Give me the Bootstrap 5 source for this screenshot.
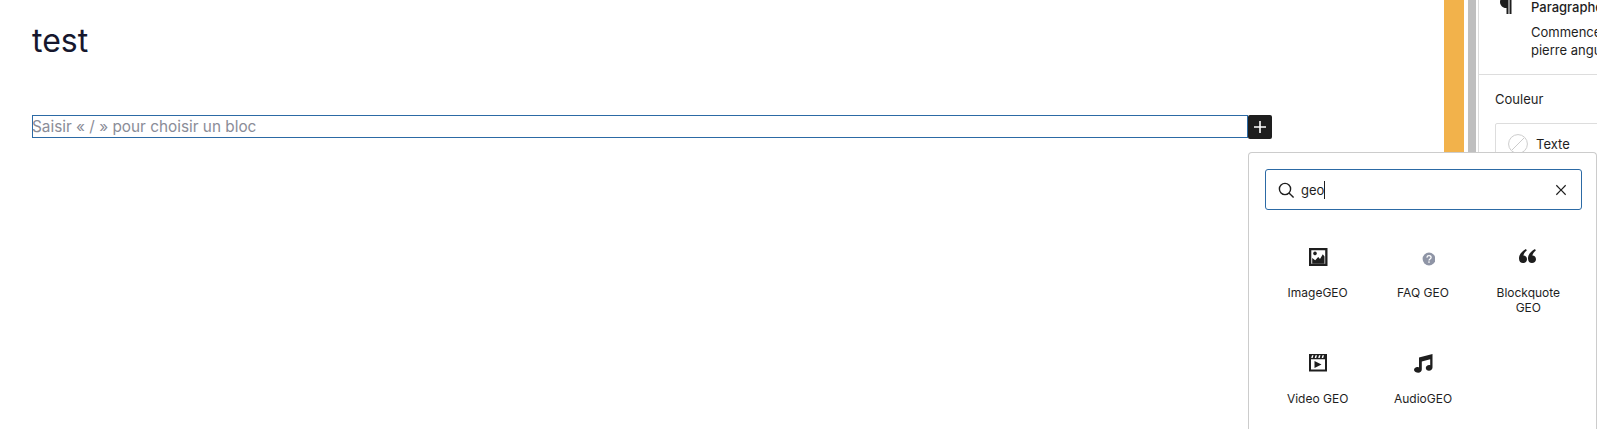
<!DOCTYPE html>
<html lang="fr">
<head>
<meta charset="UTF-8">
<meta name="viewport" content="width=device-width, initial-scale=1.0">
<title>Editeur</title>
<link href="https://cdn.jsdelivr.net/npm/bootstrap@5.3.0/dist/css/bootstrap.min.css" rel="stylesheet">
<style>
    html, body { height: 429px; overflow: hidden; background: #fff; }
    .ed-page { height: 429px; overflow: hidden; font-family: Inter, "Liberation Sans", sans-serif; color: #1e1e1e; }
    .ed-main { width: 1444px; padding: 21px 0 0 32px; font-family: Inter, sans-serif; }
    .ed-title { font-size: 32px; line-height: 40px; color: #16172d; margin: 0 0 54px 0; font-weight: 400; font-family: Inter, sans-serif; }
    .ed-line { width: 1216px; height: 23px; border: 1px solid #2c6aa5; font-size: 15.35px; line-height: 22px; color: #8b8d98; text-indent: -1px; }
    .ed-plus { width: 24px; height: 24px; background: #1e1e1e; border-radius: 2px; }
    .ed-orange { width: 20px; background: #f2b24b; }
    .ed-scroll { width: 14px; padding: 0 2px 0 4px; }
    .ed-scroll-thumb { background: #bfbfbf; }
    .ed-side { width: 119px; border-left: 1px solid #ddd; font-size: 13px; white-space: nowrap; overflow: hidden; }
    .ed-side-block { height: 77px; margin-top: -2px; padding-left: 52px; border-bottom: 1px solid #ddd; line-height: 18px; position: relative; }
    .ed-side-name { font-weight: 500; margin-bottom: 7px; }
    .ed-para-icon { position: absolute; left: 18px; top: -8px; }
    .ed-side-sec { padding: 14px 0 0 16px; }
    .ed-side-head { line-height: 20px; margin-bottom: 14px; }
    .ed-color-row { width: 200px; height: 60px; border: 1px solid #ddd; border-radius: 2px; padding: 10px 12px; gap: 8px; }
    .ed-color-name { margin-top: 1px; }
    .ed-popover { position: absolute; left: 1248px; top: 152px; width: 349px; height: 277px; background: #fff; border: 1px solid #ccc; border-bottom: 0; border-radius: 4px 4px 0 0; padding: 16px 14px 0 16px; }
    .ed-search { height: 41px; border: 1.5px solid #2c6aa5; border-radius: 3px; padding: 0 7px 0 10px; font-size: 13px; }
    .ed-caret { border-right: 1px solid #1e1e1e; height: 18px; line-height: 18px; margin-left: 5px; }
    .ed-grid { padding-right: 1px; }
    .ed-tile { height: 106px; padding-top: 35px; font-size: 12px; line-height: 15px; text-align: center; }
    .ed-tile svg { display: block; margin: 0 auto 16px auto; }
    .ed-tile-text { padding: 0 12px; }
</style>
</head>
<body>
<div class="ed-page d-flex position-relative">
    <div class="ed-main flex-shrink-0">
        <h1 class="ed-title">test</h1>
        <div class="d-flex align-items-start">
            <div class="ed-line">Saisir « / » pour choisir un bloc</div>
            <div class="ed-plus d-flex align-items-center justify-content-center">
                <svg width="24" height="24" viewBox="0 0 24 24" fill="#fff"><path d="M11.200 12.800V18h1.600v-5.200H18v-1.600h-5.200V6h-1.600v5.200H6v1.600z"/></svg>
            </div>
        </div>
    </div>
    <div class="ed-orange flex-shrink-0"></div>
    <div class="ed-scroll flex-shrink-0"><div class="ed-scroll-thumb h-100"></div></div>
    <div class="ed-side flex-shrink-0">
        <div class="ed-side-block">
            <svg class="ed-para-icon" width="24" height="24" viewBox="0 0 24 24" fill="#1e1e1e"><path d="M9 6C5.700 6 3 8.700 3 12s2.700 6 6 6h.5v6h2V6zM12.500 6h2v18h-2z"/></svg>
            <div class="ed-side-name">Paragraphe</div>
            <div>Commencez</div>
            <div>pierre angulaire</div>
        </div>
        <div class="ed-side-sec">
            <div class="ed-side-head">Couleur</div>
            <div class="ed-color-row d-flex align-items-start">
                <svg width="20" height="20" viewBox="0 0 20 20" fill="none" stroke="#ccc"><circle cx="10" cy="10" r="9.400"/><path d="M4 16 16 4"/></svg>
                <span class="ed-color-name">Texte</span>
            </div>
        </div>
    </div>

    <div class="ed-popover">
        <div class="ed-search d-flex align-items-center">
            <svg width="20" height="20" viewBox="0 0 20 20" fill="none" stroke="#1e1e1e" stroke-width="1.400"><circle cx="9" cy="9" r="5.600"/><path d="m13 13 4.600 4.600"/></svg>
            <span class="ed-caret">geo</span>
            <svg class="ms-auto" width="26" height="26" viewBox="0 0 24 24" fill="#1e1e1e"><path d="m12 12.800 3.900 3.950.8-.8L12.800 12l3.900-3.950-.8-.8L12 11.200 8.100 7.250l-.8.8L11.200 12l-3.900 3.950.8.8z"/></svg>
        </div>
        <div class="row g-0 ed-grid">
            <div class="col-4 ed-tile">
                <svg width="24" height="24" viewBox="0 0 24 24"><path fill="#1e1e1e" fill-rule="evenodd" d="M3 3h18.500v18H3zM5.300 5.300v13.400h13.900V5.300z"/><circle cx="9" cy="8.400" r="1.800" fill="#1e1e1e"/><path fill="#1e1e1e" d="M6.200 18.800v-5.800l3 2.300 3-3.200 1.800 1.800 2.800-4.600 1.700 2.300v7.200z"/></svg>
                <div class="ed-tile-text">ImageGEO</div>
            </div>
            <div class="col-4 ed-tile">
                <svg width="24" height="24" viewBox="0 0 24 24"><circle cx="18" cy="14" r="6.400" fill="#8f95a6"/><path d="M15.900 12.600c.1-1.200 1-1.900 2.100-1.900 1.200 0 2.100.8 2.100 1.800 0 1.500-2.100 1.500-2.100 3" fill="none" stroke="#fff" stroke-width="1.300"/><circle cx="18" cy="17" r=".85" fill="#fff"/></svg>
                <div class="ed-tile-text">FAQ GEO</div>
            </div>
            <div class="col-4 ed-tile">
                <svg width="24" height="24" viewBox="0 0 24 24" fill="#1e1e1e"><path d="M10 4C6.500 6 3 9 3 13.500 3 16.500 4.700 18 7 18s4-1.600 4-3.800-1.600-3.700-3.600-3.700c.3-1.700 1.400-3.400 3.400-4.900zM19 4c-3.500 2-7 5-7 9.500 0 3 1.700 4.500 4 4.500s4-1.600 4-3.800-1.600-3.700-3.600-3.700c.3-1.700 1.400-3.400 3.400-4.900z"/></svg>
                <div class="ed-tile-text">Blockquote GEO</div>
            </div>
            <div class="col-4 ed-tile">
                <svg width="24" height="24" viewBox="0 0 24 24"><path fill="#1e1e1e" fill-rule="evenodd" d="M3 3h18v17.500H3zM5 8.300v10.200h14V8.300z"/><path fill="#fff" d="M6 4.300h1.500L6.700 7H5.200zM9.500 4.300H11L10.200 7H8.700zM13 4.300h1.500L13.700 7h-1.500zM16.500 4.300H18L17.200 7h-1.500z"/><path fill="#1e1e1e" d="M8.500 10v7l7-3.500z"/></svg>
                <div class="ed-tile-text">Video GEO</div>
            </div>
            <div class="col-4 ed-tile">
                <svg width="24" height="24" viewBox="0 0 24 24" fill="#1e1e1e"><path d="M8 6.500 21.500 3v13.600c0 1.800-1.600 3.200-3.500 3.200s-3.200-1.300-3.200-2.800 1.500-2.900 3.300-2.900c.4 0 .8.100 1.100.2V8.200l-8.400 2.200v8.200c0 1.700-1.600 3.200-3.500 3.200S3 20.500 3 19s1.500-2.900 3.300-2.900c.6 0 1.200.1 1.700.3z"/></svg>
                <div class="ed-tile-text">AudioGEO</div>
            </div>
        </div>
    </div>
</div>
<script src="https://cdn.jsdelivr.net/npm/bootstrap@5.3.0/dist/js/bootstrap.bundle.min.js"></script>
</body>
</html>
